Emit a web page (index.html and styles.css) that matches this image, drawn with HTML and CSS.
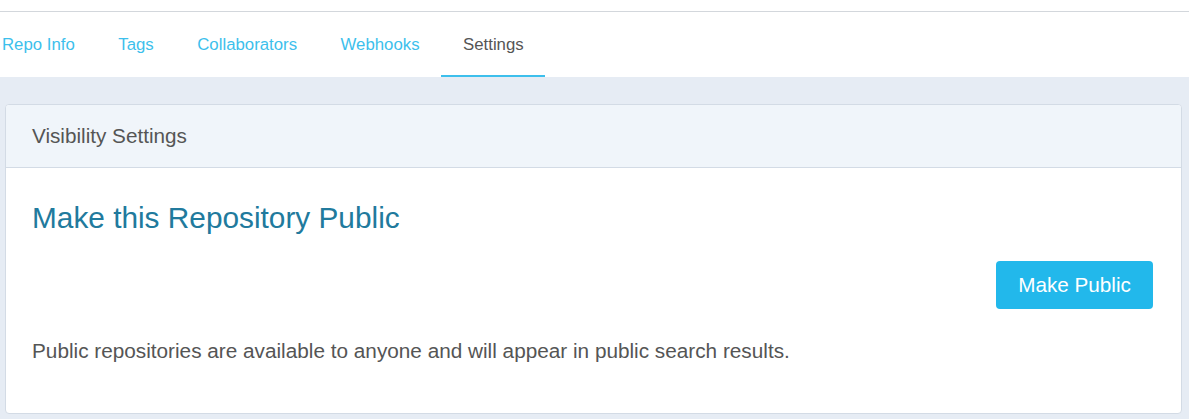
FILE: index.html
```html
<!DOCTYPE html>
<html>
<head>
<meta charset="utf-8">
<link rel="stylesheet" href="styles.css">
</head>
<body>
<div class="topbar"></div>
<nav class="tabs">
  <a class="tab">Repo Info</a>
  <a class="tab">Tags</a>
  <a class="tab">Collaborators</a>
  <a class="tab">Webhooks</a>
  <a class="tab active">Settings</a>
</nav>
<main class="content">
  <section class="card">
    <header class="card-header">Visibility Settings</header>
    <div class="card-body">
      <h2 class="title">Make this Repository Public</h2>
      <div class="actions"><button class="btn">Make Public</button></div>
      <p class="desc">Public repositories are available to anyone and will appear in public search results.</p>
    </div>
  </section>
</main>
</body>
</html>
```
FILE: styles.css
```css
* { box-sizing: border-box; }
html, body { margin: 0; padding: 0; }
body {
  font-family: "Liberation Sans", Arial, sans-serif;
  background: #e6ecf4;
  width: 1189px;
  height: 419px;
  overflow: hidden;
}
.topbar {
  height: 12px;
  background: #fff;
  border-bottom: 1px solid #d3d7dc;
}
.tabs {
  display: flex;
  background: #fff;
  height: 65px;
  margin-left: -20px;
}
.tab {
  display: flex;
  align-items: center;
  padding: 3px 21.5px 0 22px;
  font-size: 16.8px;
  color: #3dbfec;
  border-bottom: 2px solid transparent;
}
.tab.active {
  color: #555;
  border-bottom-color: #3dbfec;
}
.content {
  padding: 27px 7px 0 5px;
}
.card {
  background: #fff;
  border: 1px solid #d3dbe5;
  border-radius: 4px;
  height: 310px;
  overflow: hidden;
}
.card-header {
  background: #f0f5fa;
  border-bottom: 1px solid #d3dbe5;
  height: 63px;
  display: flex;
  align-items: center;
  padding-left: 26px;
  font-size: 20.7px;
  color: #555;
}
.card-body {
  padding: 33px 28px 0 26px;
}
.title {
  margin: 0;
  font-weight: normal;
  font-size: 29.8px;
  color: #217a9d;
  line-height: 34px;
}
.actions {
  display: flex;
  justify-content: flex-end;
  margin-top: 26px;
}
.btn {
  font-family: inherit;
  background: #22b8eb;
  color: #fff;
  border: none;
  border-radius: 4px;
  height: 48px;
  width: 157px;
  font-size: 20.7px;
}
.desc {
  margin: 30px 0 0;
  font-size: 20.75px;
  line-height: 24px;
  color: #555;
}
```
